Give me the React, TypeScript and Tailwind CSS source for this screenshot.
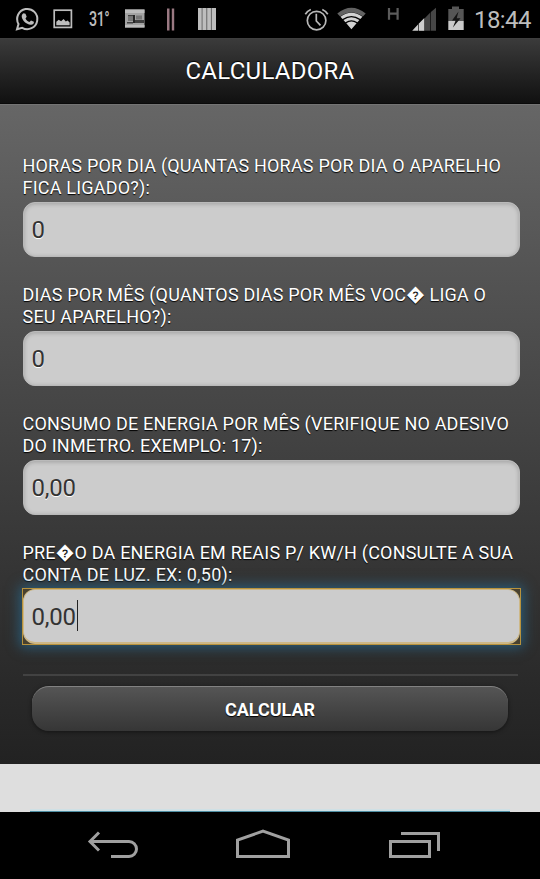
import { useState } from "react";

const fields = [
    {
        id: "horas",
        lines: ["HORAS POR DIA (QUANTAS HORAS POR DIA O APARELHO", "FICA LIGADO?):"],
        value: "0",
    },
    {
        id: "dias",
        lines: ["DIAS POR MÊS (QUANTOS DIAS POR MÊS VOC\uFFFD LIGA O", "SEU APARELHO?):"],
        value: "0",
    },
    {
        id: "consumo",
        lines: ["CONSUMO DE ENERGIA POR MÊS (VERIFIQUE NO ADESIVO", "DO INMETRO. EXEMPLO: 17):"],
        value: "0,00",
    },
    {
        id: "preco",
        lines: ["PRE\uFFFDO DA ENERGIA EM REAIS P/ KW/H (CONSULTE A SUA", "CONTA DE LUZ. EX: 0,50):"],
        value: "0,00",
    },
];

function StatusBar() {
    return (
        <div className="flex h-[38px] items-center bg-black text-[#bdbdbd]">
            {/* Notifications */}
            <svg className="h-[38px] w-[86px] shrink-0" viewBox="0 0 86 38" fill="none" stroke="#bdbdbd">
                <path d="M17 29.3l1.5-5.2a10.1 10.1 0 1 1 3.7 3.7z" strokeWidth="2" />
                <path
                    d="M23.6 13.2l1.9.5 1.2 3-1.2 1.7c.9 1.8 2.2 3 4 3.7l1.5-1.7 2.9 1.4c.3 2-1.4 3.2-3.2 3-4.6-.5-8.6-4.5-9-8.3-.1-1.4.8-2.8 1.9-3.3z"
                    fill="#bdbdbd"
                    stroke="none"
                />
                <rect x="54.2" y="10.2" width="17.2" height="17.2" strokeWidth="1.7" />
                <path d="M56.3 25.2v-3.4l2.4-2 2.4 1.4 2.5-2.2 2.2 2.4 1.8-1 2 2v2.8z" fill="#bdbdbd" stroke="none" />
            </svg>
            <span className="w-[37px] pl-[3px] font-[Roboto,sans-serif] text-[21px] leading-none tracking-[-0.7px]">
                <span className="inline-block origin-left scale-x-[0.68] font-medium">31°</span>
            </span>
            <svg className="h-[38px] w-[97px] shrink-0" viewBox="123 0 97 38">
                <rect x="125" y="9.5" width="19.5" height="18" fill="#a2a2a2" />
                <path d="M125 9.5h19.5v3.5H125zM125 25h19.5v2.5H125z" fill="#bcbcbc" />
                <path d="M128 15h6v1.5h-6zM127 22h6v1.5h-6zM135 20h9v3h-9z" fill="#404040" />
                <path d="M128 17h5v4h-5zM136 15.5h6v4h-6z" fill="#767676" />
                <path d="M133 15h2v8h-2z" fill="#242424" />
                <path d="M167 8.5h2.5v22H167zM171.8 8.5h2.4v22h-2.4z" fill="#9a7982" />
                <path d="M198 8h18v22h-18z" fill="#6c6c6c" />
                <path d="M198 8h3.6v22H198zM202.6 8h3.6v22h-3.6zM207.3 8h3.6v22h-3.6zM212 8h4v22h-4z" fill="#bdbdbd" />
            </svg>
            {/* System */}
            <svg className="ml-auto h-[38px] w-[172px] shrink-0" viewBox="300 0 172 38" fill="none">
                <g stroke="#b8b8b8" strokeWidth="1.7">
                    <circle cx="316.6" cy="20.6" r="9.3" />
                    <path d="M316.3 13.8v7.2l4.2 4.4M305.3 14.3a13 13 0 0 1 5.5-4.7M322.3 9.6a13 13 0 0 1 5.5 4.7" />
                </g>
                <path d="M337.3 13.5q14-11.3 28.4 0l-2.8 3.1q-11.5-8-22.8 0z" fill="#626262" />
                <path
                    d="M340.5 16.8q10.8-8.2 21.9 0l-2 2.3q-8.9-6.1-17.9 0zM343.5 20.1q7.8-5.7 15.9 0l-2 2.2q-6-4-12 0zM346.3 23.3q5.1-3.6 10.3 0l-5.2 6z"
                    fill="#d2d2d2"
                />
                <path d="M389 8v11.7M397.6 8v11.7M389 13.7h8.6" stroke="#5c5c5c" strokeWidth="2.2" />
                <path d="M424.5 18.2v12.6h-5.7v-6.9zM430.3 12.6v18.2H425V17.9zM436 7.7v23.1h-5.1V12z" fill="#464646" />
                <path d="M412.2 30.8l5.8-6.2v6.2zM418.7 23.8l5.6-5.7v12.7h-5.6z" fill="#cdcdcd" />
                <path d="M452 6.5h7v2.4h4.7V21h-15.4V8.9h3.7z" fill="#565656" />
                <path d="M448.3 21h15.4v9h-15.4z" fill="#cacaca" />
                <path d="M458.5 11.5l-6.5 9h3.6l-2.7 7 7.6-9.2h-3.8z" fill="#151515" />
            </svg>
            <span className="w-[68px] pt-px pl-[2px] font-[Roboto,sans-serif] text-[24px] leading-none tracking-[-0.6px]">18:44</span>
        </div>
    );
}

function NavBar() {
    return (
        <div className="flex h-[67px] bg-black">
            <svg className="h-full w-full" viewBox="0 812 540 67" fill="none" stroke="#a0a0a0" strokeWidth="3">
                <path d="M111 856.5h18a7.4 7.4 0 0 0 0-15H91M99 832.5l-9 9 9 9" />
                <path d="M237.5 856.5v-16.4l25.5-9 25.5 9v16.4z" />
                <path d="M390.5 841.5h39v15h-39zM401 833.5h37.5v17.5" />
            </svg>
        </div>
    );
}

export default function App() {
    const [values, setValues] = useState(fields.map((f) => f.value));

    return (
        <div className="flex h-[879px] w-[540px] flex-col overflow-hidden bg-[#dedede] font-[Roboto,sans-serif]">
            <StatusBar />

            <header className="flex h-[66px] items-center justify-center border-y border-t-[#3e3e3e] border-b-[#0a0a0a] bg-linear-to-b from-[#3b3b3b] to-[#111111]">
                <h1 className="text-[24px] leading-none tracking-[0.27px] text-white [text-shadow:0_-1px_1px_#000]">CALCULADORA</h1>
            </header>

            <main className="h-[660px] border-t border-[#747474] bg-linear-to-b from-[#666666] to-[#222222] px-[23px] pt-[50px]">
                {fields.map((field, i) => {
                    const focused = i === fields.length - 1;
                    return (
                        <div key={field.id} className="h-[129px]">
                            <label
                                htmlFor={field.id}
                                className="-ml-[0.5px] block h-[47px] text-[18px] leading-[22px] tracking-[0.2px] whitespace-nowrap text-white [text-shadow:0_1px_1px_#000]"
                            >
                                {field.lines.map((line) => (
                                    <span key={line} className="block">
                                        {line}
                                    </span>
                                ))}
                            </label>
                            <div
                                className={
                                    focused
                                        ? "relative w-[497px] bg-[#48412f] shadow-[0_0_12px_3px_#2a5f7c] outline-1 outline-[#b8923c]"
                                        : "relative w-[497px]"
                                }
                            >
                                <input
                                    id={field.id}
                                    value={values[i]}
                                    onChange={(e) => setValues(values.map((v, j) => (j === i ? e.target.value : v)))}
                                    className={
                                        focused
                                            ? "block h-[55px] w-full rounded-[12px] border border-b-2 border-[#cdb887] bg-[#cccccc] px-[7.5px] pt-px text-[24px] tracking-[-0.2px] text-[#333333] outline-none"
                                            : "block h-[55px] w-full rounded-[12px] border border-[#bababa] bg-[#cccccc] px-[7.5px] pt-px text-[24px] tracking-[-0.2px] text-[#333333] shadow-[inset_0_1px_4px_rgba(0,0,0,0.22)] outline-none [text-shadow:0_1px_0_#fff]"
                                    }
                                />
                                {focused && <span className="absolute top-[11px] left-[54px] h-[31px] w-px bg-[#222222]" />}
                            </div>
                        </div>
                    );
                })}

                <div className="mt-[3px] h-[2px] w-[495px] bg-[#424242]" />
                <button className="mt-[10px] ml-[9px] block h-[45px] w-[476px] rounded-[17px] border-t border-[#828282] bg-linear-to-b from-[#555555] to-[#363636] text-[18px] font-bold text-white shadow-[0_1px_4px_rgba(0,0,0,0.5)] [text-shadow:0_1px_1px_#000]">
                    CALCULAR
                </button>
            </main>

            <div className="flex h-[48px] flex-col justify-end bg-[#dedede]">
                <div className="ml-[30px] h-[3px] w-[480px] border-b border-[#4f8ea3] bg-[#cfe0e5]" />
            </div>

            <NavBar />
        </div>
    );
}
